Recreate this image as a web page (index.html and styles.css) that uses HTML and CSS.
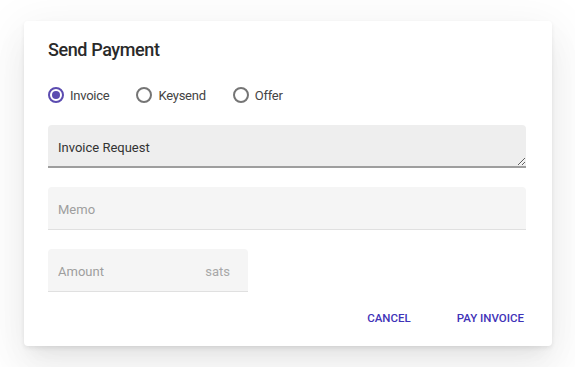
FILE: index.html
```html
<!DOCTYPE html>
<html>
<head>
<meta charset="utf-8">
<link rel="stylesheet" href="styles.css">
</head>
<body>
<div class="dialog">
  <h2 class="title">Send Payment</h2>
  <div class="radios">
    <label class="radio"><span class="circle checked"></span>Invoice</label>
    <label class="radio"><span class="circle"></span>Keysend</label>
    <label class="radio"><span class="circle"></span>Offer</label>
  </div>
  <div class="fields">
    <textarea class="field invoice" placeholder="Invoice Request"></textarea>
    <input class="field memo" placeholder="Memo">
    <div class="field amount">
      <input class="amount-input" placeholder="Amount">
      <span class="suffix">sats</span>
    </div>
  </div>
  <div class="actions">
    <button class="btn">CANCEL</button>
    <button class="btn">PAY INVOICE</button>
  </div>
</div>
</body>
</html>
```
FILE: styles.css
```css
html, body {
  margin: 0;
  padding: 0;
  background: #ffffff;
  font-family: Roboto, "Liberation Sans", sans-serif;
}
body {
  box-sizing: border-box;
  min-height: 367px;
  padding: 21px 0 0 24px;
}
.dialog {
  box-sizing: border-box;
  width: 528px;
  height: 325px;
  background: #fff;
  border-radius: 4px;
  padding: 17px 28px 0 24px;
  box-shadow: 0 2px 4px rgba(0,0,0,.07), 0 11px 15px -7px rgba(0,0,0,.06), 0 24px 38px 3px rgba(0,0,0,.04), 0 9px 46px 8px rgba(0,0,0,.05);
}
.title {
  margin: 0;
  font-size: 18px;
  font-weight: 500;
  letter-spacing: -0.4px;
  line-height: 24px;
  color: #2a2a2a;
}
.radios {
  display: flex;
  align-items: center;
  gap: 27px;
  margin-top: 21px;
  height: 24px;
}
.radio {
  display: flex;
  align-items: center;
  gap: 6px;
  font-size: 13px;
  letter-spacing: -0.25px;
  color: #444;
}
.circle {
  box-sizing: border-box;
  width: 16px;
  height: 16px;
  border: 2px solid #757575;
  border-radius: 50%;
  display: flex;
  align-items: center;
  justify-content: center;
}
.circle.checked {
  border-color: #5b4bb0;
}
.circle.checked::after {
  content: "";
  width: 8px;
  height: 8px;
  border-radius: 50%;
  background: #5b4bb0;
}
.fields {
  margin-top: 18px;
  display: flex;
  flex-direction: column;
  gap: 19px;
}
.field {
  box-sizing: border-box;
  display: block;
  width: 478px;
  height: 43px;
  margin: 0;
  border: none;
  border-bottom: 1px solid #e0e0e0;
  border-radius: 4px 4px 0 0;
  background: #f5f5f5;
  font-family: Roboto, "Liberation Sans", sans-serif;
  font-size: 13px;
  color: #333;
  padding: 0 10px;
  outline: none;
}
.field::placeholder, .amount-input::placeholder {
  color: #9e9e9e;
}
.invoice {
  background: #eeeeee;
  border-bottom: 2px solid #9e9e9e;
  padding-top: 15px;
  resize: vertical;
  line-height: 16px;
}
.invoice::placeholder {
  color: #333;
}
.memo {
  padding-top: 2px;
}
.amount {
  width: 200px;
  display: flex;
  align-items: center;
  padding: 2px 18px 0 10px;
}
.amount-input {
  flex: 1;
  min-width: 0;
  border: none;
  background: transparent;
  font-family: inherit;
  font-size: 13px;
  padding: 0;
  outline: none;
}
.suffix {
  color: #a8a8a8;
  font-size: 13px;
}
.actions {
  display: flex;
  justify-content: flex-end;
  gap: 46px;
  margin-top: 18px;
}
.btn {
  border: none;
  background: none;
  padding: 0;
  font-family: Roboto, "Liberation Sans", sans-serif;
  font-size: 11.5px;
  font-weight: 500;
  color: #3f33b8;
  line-height: 16px;
}
```
